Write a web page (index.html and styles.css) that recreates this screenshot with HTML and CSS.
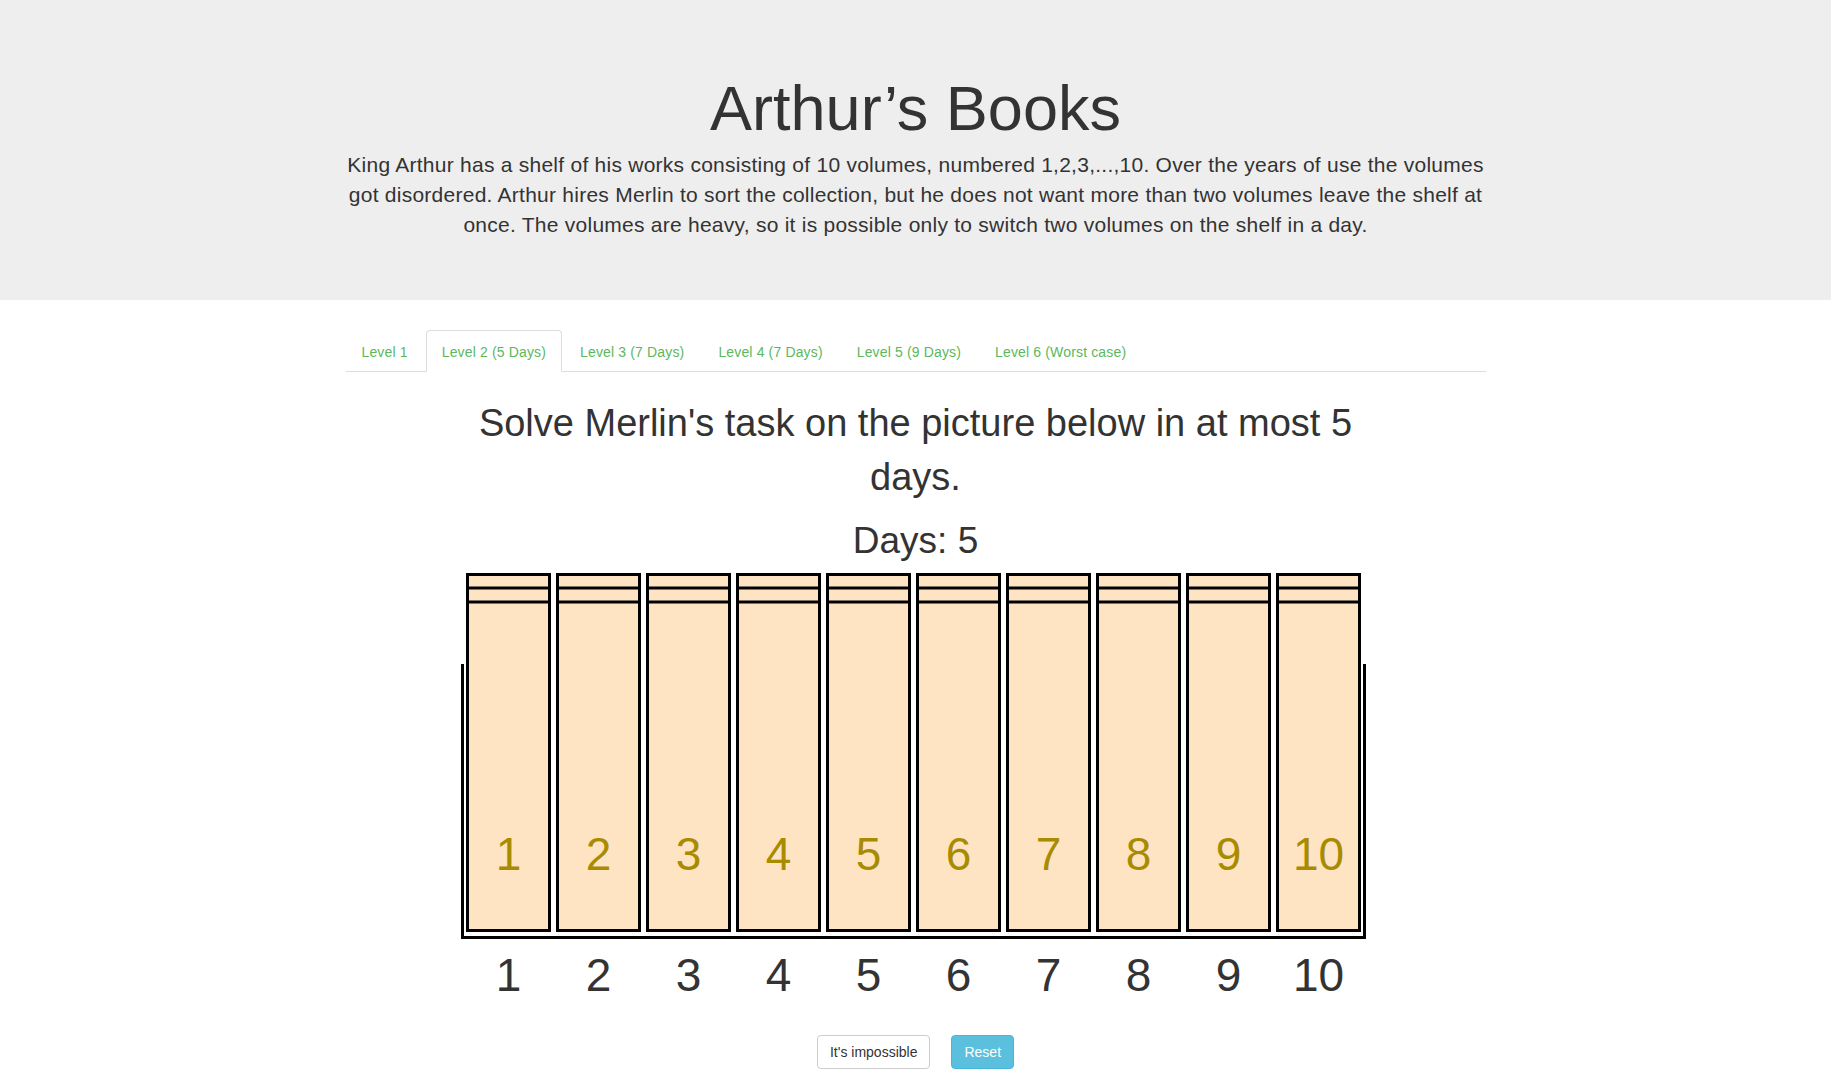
FILE: index.html
```html
<!DOCTYPE html>
<html lang="en">
<head>
<meta charset="utf-8">
<title>Arthur’s Books</title>
<link rel="stylesheet" href="styles.css">
</head>
<body>
<div class="jumbotron">
  <div class="container">
    <h1>Arthur’s Books</h1>
    <p>King Arthur has a shelf of his works consisting of 10 volumes, numbered 1,2,3,...,10. Over the years of use the volumes got disordered. Arthur hires Merlin to sort the collection, but he does not want more than two volumes leave the shelf at once. The volumes are heavy, so it is possible only to switch two volumes on the shelf in a day.</p>
  </div>
</div>
<div class="container">
  <ul class="nav-tabs">
    <li><a href="#">Level 1</a></li>
    <li class="active"><a href="#">Level 2 (5 Days)</a></li>
    <li><a href="#">Level 3 (7 Days)</a></li>
    <li><a href="#">Level 4 (7 Days)</a></li>
    <li><a href="#">Level 5 (9 Days)</a></li>
    <li><a href="#">Level 6 (Worst case)</a></li>
  </ul>
  <div class="tab-content">
    <h2 class="task">Solve Merlin's task on the picture below in at most 5 days.</h2>
    <div class="days">Days: 5</div>
    <svg class="shelf" width="911" height="433" viewBox="0 0 911 433" xmlns="http://www.w3.org/2000/svg">
      <g class="book" transform="translate(0,0)"><rect x="7.5" y="2.5" width="82" height="356"/><line x1="7.5" y1="16" x2="89.5" y2="16"/><line x1="7.5" y1="30" x2="89.5" y2="30"/><text x="48.5" y="298">1</text></g>
      <g class="book" transform="translate(90,0)"><rect x="7.5" y="2.5" width="82" height="356"/><line x1="7.5" y1="16" x2="89.5" y2="16"/><line x1="7.5" y1="30" x2="89.5" y2="30"/><text x="48.5" y="298">2</text></g>
      <g class="book" transform="translate(180,0)"><rect x="7.5" y="2.5" width="82" height="356"/><line x1="7.5" y1="16" x2="89.5" y2="16"/><line x1="7.5" y1="30" x2="89.5" y2="30"/><text x="48.5" y="298">3</text></g>
      <g class="book" transform="translate(270,0)"><rect x="7.5" y="2.5" width="82" height="356"/><line x1="7.5" y1="16" x2="89.5" y2="16"/><line x1="7.5" y1="30" x2="89.5" y2="30"/><text x="48.5" y="298">4</text></g>
      <g class="book" transform="translate(360,0)"><rect x="7.5" y="2.5" width="82" height="356"/><line x1="7.5" y1="16" x2="89.5" y2="16"/><line x1="7.5" y1="30" x2="89.5" y2="30"/><text x="48.5" y="298">5</text></g>
      <g class="book" transform="translate(450,0)"><rect x="7.5" y="2.5" width="82" height="356"/><line x1="7.5" y1="16" x2="89.5" y2="16"/><line x1="7.5" y1="30" x2="89.5" y2="30"/><text x="48.5" y="298">6</text></g>
      <g class="book" transform="translate(540,0)"><rect x="7.5" y="2.5" width="82" height="356"/><line x1="7.5" y1="16" x2="89.5" y2="16"/><line x1="7.5" y1="30" x2="89.5" y2="30"/><text x="48.5" y="298">7</text></g>
      <g class="book" transform="translate(630,0)"><rect x="7.5" y="2.5" width="82" height="356"/><line x1="7.5" y1="16" x2="89.5" y2="16"/><line x1="7.5" y1="30" x2="89.5" y2="30"/><text x="48.5" y="298">8</text></g>
      <g class="book" transform="translate(720,0)"><rect x="7.5" y="2.5" width="82" height="356"/><line x1="7.5" y1="16" x2="89.5" y2="16"/><line x1="7.5" y1="30" x2="89.5" y2="30"/><text x="48.5" y="298">9</text></g>
      <g class="book" transform="translate(810,0)"><rect x="7.5" y="2.5" width="82" height="356"/><line x1="7.5" y1="16" x2="89.5" y2="16"/><line x1="7.5" y1="30" x2="89.5" y2="30"/><text x="48.5" y="298">10</text></g>
      <path class="frame" d="M2.5 92 V365.5 H904.5 V92"/>
      <g class="labels">
        <text x="48.5" y="419">1</text>
        <text x="138.5" y="419">2</text>
        <text x="228.5" y="419">3</text>
        <text x="318.5" y="419">4</text>
        <text x="408.5" y="419">5</text>
        <text x="498.5" y="419">6</text>
        <text x="588.5" y="419">7</text>
        <text x="678.5" y="419">8</text>
        <text x="768.5" y="419">9</text>
        <text x="858.5" y="419">10</text>
      </g>
    </svg>
    <div class="actions">
      <button class="btn btn-default" type="button">It's impossible</button>
      <button class="btn btn-info" type="button">Reset</button>
    </div>
  </div>
</div>
</body>
</html>
```
FILE: styles.css
```css
* {
  box-sizing: border-box;
}

html, body {
  margin: 0;
  padding: 0;
  background: #fff;
}

body {
  font-family: "Liberation Sans", Arial, Helvetica, sans-serif;
  font-size: 14px;
  line-height: 1.42857143;
  color: #333;
}

.container {
  width: 1170px;
  margin: 0 auto;
  padding: 0 15px;
}

.jumbotron {
  background-color: #eee;
  padding: 48px 0;
  margin-bottom: 30px;
  text-align: center;
}

.jumbotron h1 {
  margin: 26px 0 7px;
  font-size: 63px;
  line-height: 1.1;
  font-weight: 500;
  color: #333;
}

.jumbotron p {
  margin: 0 0 12px;
  font-size: 21px;
  line-height: 30px;
  font-weight: 200;
  letter-spacing: 0.25px;
}

.nav-tabs {
  list-style: none;
  margin: 0;
  padding: 0;
  display: flex;
  border-bottom: 1px solid #ddd;
}

.nav-tabs li {
  margin-bottom: -1px;
}

.nav-tabs a {
  display: block;
  margin-right: 2px;
  padding: 11px 15px 9px;
  line-height: 20px;
  border: 1px solid transparent;
  border-radius: 4px 4px 0 0;
  color: #5cb85c;
  text-decoration: none;
  letter-spacing: 0.15px;
}

.nav-tabs .active a {
  background: #fff;
  border-color: #ddd #ddd transparent;
}

.tab-content {
  text-align: center;
}

.task {
  max-width: 945px;
  margin: 24px auto 0;
  font-size: 38px;
  line-height: 54px;
  font-weight: 500;
  color: #333;
}

.days {
  margin-top: 10px;
  font-size: 37px;
  line-height: 54px;
  color: #333;
}

.shelf {
  display: block;
  margin: 4px auto 0;
}

.book rect {
  fill: #ffe4c4;
  stroke: #000;
  stroke-width: 3;
}

.book line {
  stroke: #000;
  stroke-width: 3;
}

.book text {
  fill: #a88b00;
  font-family: "Liberation Sans", Arial, sans-serif;
  font-size: 46px;
  text-anchor: middle;
}

.frame {
  fill: none;
  stroke: #000;
  stroke-width: 3;
  stroke-linejoin: miter;
}

.labels text {
  fill: #333;
  font-family: "Liberation Sans", Arial, sans-serif;
  font-size: 46px;
  text-anchor: middle;
}

.actions {
  display: flex;
  justify-content: center;
  gap: 21px;
  margin-top: 30px;
}

.btn {
  display: inline-block;
  padding: 6px 12px;
  font-family: "Liberation Sans", Arial, sans-serif;
  font-size: 14px;
  line-height: 20px;
  border: 1px solid transparent;
  border-radius: 4px;
  cursor: pointer;
}

.btn-default {
  color: #333;
  background-color: #fff;
  border-color: #ccc;
}

.btn-info {
  color: #fff;
  background-color: #5bc0de;
  border-color: #46b8da;
}
```
